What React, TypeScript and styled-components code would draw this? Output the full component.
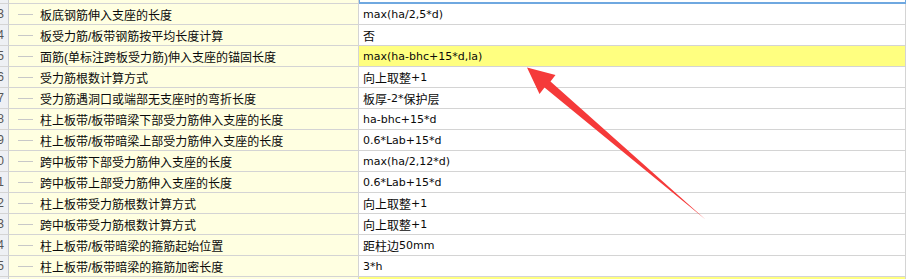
import React from 'react';
import styled, { createGlobalStyle } from 'styled-components';

type Setting = { no: number; name: string; value: string; marked?: boolean };

const settings: Setting[] = [
  { no: 13, name: '板底钢筋伸入支座的长度', value: 'max(ha/2,5*d)' },
  { no: 14, name: '板受力筋/板带钢筋按平均长度计算', value: '否' },
  { no: 15, name: '面筋(单标注跨板受力筋)伸入支座的锚固长度', value: 'max(ha-bhc+15*d,la)', marked: true },
  { no: 16, name: '受力筋根数计算方式', value: '向上取整+1' },
  { no: 17, name: '受力筋遇洞口或端部无支座时的弯折长度', value: '板厚-2*保护层' },
  { no: 18, name: '柱上板带/板带暗梁下部受力筋伸入支座的长度', value: 'ha-bhc+15*d' },
  { no: 19, name: '柱上板带/板带暗梁上部受力筋伸入支座的长度', value: '0.6*Lab+15*d' },
  { no: 20, name: '跨中板带下部受力筋伸入支座的长度', value: 'max(ha/2,12*d)' },
  { no: 21, name: '跨中板带上部受力筋伸入支座的长度', value: '0.6*Lab+15*d' },
  { no: 22, name: '柱上板带受力筋根数计算方式', value: '向上取整+1' },
  { no: 23, name: '跨中板带受力筋根数计算方式', value: '向上取整+1' },
  { no: 24, name: '柱上板带/板带暗梁的箍筋起始位置', value: '距柱边50mm' },
  { no: 25, name: '柱上板带/板带暗梁的箍筋加密长度', value: '3*h' },
];

// formulas use a Tahoma-like face, Chinese runs stay in the CJK face
const Formula: React.FC<{ text: string }> = ({ text }) => (
  <>
    {text.split(/([\u4e00-\u9fff]+)/).map((part, i) =>
      part === '' ? null : /[\u4e00-\u9fff]/.test(part) ? (
        <span key={i}>{part}</span>
      ) : (
        <Latin key={i}>{part}</Latin>
      )
    )}
  </>
);

export default function App() {
  return (
    <>
      <GlobalStyle />
      <Sheet>
        <Row $h={4}>
          <NoCell />
          <NameCell />
          <ValueCell $selected />
        </Row>
        {settings.map((s) => (
          <Row key={s.no} $h={21}>
            <NoCell>{s.no}</NoCell>
            <NameCell>
              <Branch />
              {s.name}
            </NameCell>
            <ValueCell $marked={s.marked}>
              <Formula text={s.value} />
            </ValueCell>
          </Row>
        ))}
        <Row $h={21}>
          <NoCell>26</NoCell>
          <NameCell />
          <ValueCell $marked />
        </Row>
        <Pointer width="908" height="279" viewBox="0 0 908 279">
          <path
            d="M527 67.5 L555.5 75 L550.5 81.5 L705.5 219.5 L544.5 87.5 L539.5 94 Z"
            fill="#f53a3a"
          />
        </Pointer>
      </Sheet>
    </>
  );
}

const GlobalStyle = createGlobalStyle`
  body {
    margin: 0;
    background: #fff;
    font-family: "Liberation Sans", "Noto Sans CJK SC", sans-serif;
    font-size: 12px;
    color: #0a0a0a;
  }
`;

const Sheet = styled.div`
  position: relative;
  width: 908px;
  height: 279px;
  overflow: hidden;
`;

const Row = styled.div<{ $h: number }>`
  display: grid;
  grid-template-columns: 9px 350px 547px;
  height: ${(p) => p.$h}px;
`;

const NoCell = styled.div`
  box-sizing: border-box;
  border-right: 1px solid #c9ccd2;
  border-bottom: 1px solid #d4d4d4;
  background: #eef0f4;
  color: #555;
  direction: rtl;
  overflow: hidden;
  white-space: nowrap;
  padding-right: 4px;
  line-height: 20px;
`;

const NameCell = styled.div`
  display: flex;
  align-items: center;
  box-sizing: border-box;
  background: #ffffe1;
  border-bottom: 1px solid #d4d4d4;
  border-right: 1px solid #d4d4d4;
  white-space: nowrap;
  padding-top: 1px;
`;

const Branch = styled.span`
  width: 15px;
  height: 1px;
  margin: 0 7px 0 9px;
  background: #c8c8c8;
`;

const ValueCell = styled.div<{ $marked?: boolean; $selected?: boolean }>`
  display: flex;
  align-items: center;
  box-sizing: border-box;
  padding: 1px 0 0 4px;
  background: ${(p) => (p.$marked ? '#ffff80' : '#fff')};
  border-bottom: ${(p) => (p.$selected ? '2px solid #6fa8e0' : '1px solid #d4d4d4')};
  border-right: 1px solid ${(p) => (p.$selected ? '#6fa8e0' : '#d4d4d4')};
  border-left: ${(p) => (p.$selected ? '1px solid #6fa8e0' : 'none')};
  white-space: nowrap;
`;

const Latin = styled.span`
  font-family: "DejaVu Sans", "Noto Sans CJK SC", sans-serif;
  font-size: 11px;
`;

const Pointer = styled.svg`
  position: absolute;
  left: 0;
  top: 0;
  pointer-events: none;
`;
